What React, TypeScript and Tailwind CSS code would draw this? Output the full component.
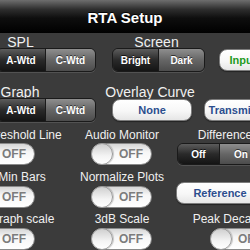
import React from "react";

const segSel =
  "flex h-full items-center justify-center text-[10px] font-bold text-white bg-[linear-gradient(to_bottom,#5c5c5c,#2a2a2a_50%,#141414)] [text-shadow:0_-1px_0_rgba(0,0,0,0.7)]";
const segUn =
  "flex h-full items-center justify-center text-[10px] font-bold text-white bg-[linear-gradient(to_bottom,#8e8e8e,#666666_50%,#4c4c4c)] [text-shadow:0_-1px_0_rgba(0,0,0,0.6)]";

function Seg({
  a,
  b,
  wa,
  wb,
  h = "h-[24px]",
  sel = 0,
}: {
  a: string;
  b: string;
  wa: string;
  wb: string;
  h?: string;
  sel?: number;
}) {
  return (
    <div
      className={`flex shrink-0 ${h} overflow-hidden rounded-[6px] border border-[#1a1a1a] shadow-[0_1px_0_rgba(255,255,255,0.12)]`}
    >
      <div className={`${wa} ${sel === 0 ? segSel : segUn} border-r border-[#1a1a1a]`}>{a}</div>
      <div className={`${wb} ${sel === 1 ? segSel : segUn}`}>{b}</div>
    </div>
  );
}

function WhiteBtn({ children, w, color = "text-[#2c4e8e]", extra = "" }: { children: React.ReactNode; w: string; color?: string; extra?: string }) {
  return (
    <div
      className={`flex h-[22px] ${w} shrink-0 items-center justify-center whitespace-nowrap rounded-[8px] border border-[#7c7c7c] bg-[linear-gradient(to_bottom,#ffffff,#f7f7f7_55%,#e6e6e6)] text-[11px] font-bold ${color} shadow-[0_1px_1px_rgba(0,0,0,0.4)] ${extra}`}
    >
      {children}
    </div>
  );
}

function Switch({ ml }: { ml: string }) {
  return (
    <div
      className={`flex h-[22px] w-[61px] shrink-0 items-center rounded-full border border-[#8a8a8a] bg-[linear-gradient(to_bottom,#d6d6d6,#f6f6f6_40%,#ffffff)] ${ml}`}
    >
      <div className="-ml-px h-[22px] w-[22px] shrink-0 rounded-full border border-[#9a9a9a] bg-[linear-gradient(to_bottom,#cfcfcf,#f4f4f4_60%,#ffffff)] shadow-[1px_0_1px_rgba(0,0,0,0.2)]" />
      <span className="flex-1 pr-[2px] text-center text-[12px] font-bold leading-none text-[#7c7c7c]">OFF</span>
    </div>
  );
}

export default function App() {
  return (
    <div className="flex h-[250px] w-[250px] flex-col overflow-hidden bg-[#3b3b3b] font-['Liberation_Sans',Arial,sans-serif] text-[#f0f0f0]">
      <div className="flex h-[33px] shrink-0 items-center justify-center bg-[linear-gradient(to_bottom,#6e6e6e_0%,#2e2e2e_28%,#0e0e0e_55%,#000000_100%)] pt-[2px] text-[15px] font-bold leading-none text-white [text-shadow:0_-1px_0_rgba(0,0,0,0.8)]">
        RTA Setup
      </div>

      {/* Row 1 labels */}
      <div className="mt-[3px] flex h-[12px] shrink-0 items-center whitespace-nowrap text-[14px] leading-none">
        <div className="w-[41px] shrink-0 text-center">SPL</div>
        <div className="ml-[89px] w-[53px] shrink-0 text-center">Screen</div>
      </div>
      {/* Row 1 controls */}
      <div className="flex h-[24px] shrink-0 items-center">
        <div className="-ml-[4px] shrink-0">
          <Seg a="A-Wtd" b="C-Wtd" wa="w-[49px]" wb="w-[49px]" sel={0} />
        </div>
        <div className="ml-[16px] shrink-0">
          <Seg a="Bright" b="Dark" wa="w-[46px]" wb="w-[45px]" sel={0} />
        </div>
        <WhiteBtn w="w-[48px]" color="text-[#1f9a1f]" extra="ml-[14px]">
          Input
        </WhiteBtn>
      </div>

      {/* Row 2 labels */}
      <div className="mt-[14px] flex h-[12px] shrink-0 items-center whitespace-nowrap text-[14px] leading-none">
        <div className="w-[40px] shrink-0 text-center">Graph</div>
        <div className="ml-[60px] w-[100px] shrink-0 text-center">Overlay Curve</div>
      </div>
      {/* Row 2 controls */}
      <div className="flex h-[24px] shrink-0 items-center">
        <div className="-ml-[4px] shrink-0">
          <Seg a="A-Wtd" b="C-Wtd" wa="w-[49px]" wb="w-[49px]" sel={0} />
        </div>
        <WhiteBtn w="w-[80px]" extra="ml-[16px]">
          None
        </WhiteBtn>
        <WhiteBtn w="w-[80px]" extra="ml-[12px]">
          Transmission
        </WhiteBtn>
      </div>

      {/* Row 3 labels */}
      <div className="mt-[7px] flex h-[12px] shrink-0 items-center whitespace-nowrap text-[12px] leading-none">
        <div className="-ml-[23px] w-[90px] shrink-0 text-center">Threshold Line</div>
        <div className="ml-[10px] w-[90px] shrink-0 text-center">Audio Monitor</div>
        <div className="ml-[13px] w-[90px] shrink-0 text-center">Difference</div>
      </div>
      {/* Row 3 controls */}
      <div className="mt-[2px] flex h-[22px] shrink-0 items-center">
        <Switch ml="-ml-[26px]" />
        <Switch ml="ml-[56px]" />
        <div className="ml-[25px] shrink-0">
          <Seg a="Off" b="On" wa="w-[42px]" wb="w-[42px]" h="h-[22px]" sel={0} />
        </div>
      </div>

      {/* Row 4 labels */}
      <div className="mt-[6px] flex h-[12px] shrink-0 items-center whitespace-nowrap text-[12px] leading-none">
        <div className="-ml-[23px] w-[90px] shrink-0 text-center">Min Bars</div>
        <div className="ml-[10px] w-[90px] shrink-0 text-center">Normalize Plots</div>
      </div>
      {/* Row 4 controls */}
      <div className="mt-[3px] flex h-[22px] shrink-0 items-start">
        <Switch ml="-ml-[26px]" />
        <Switch ml="ml-[56px]" />
        <WhiteBtn w="w-[88px]" extra="ml-[24px] -mt-[4px] h-[21px]">
          Reference
        </WhiteBtn>
      </div>

      {/* Row 5 labels */}
      <div className="mt-[5px] flex h-[12px] shrink-0 items-center whitespace-nowrap text-[12px] leading-none">
        <div className="-ml-[23px] w-[90px] shrink-0 text-center">Graph scale</div>
        <div className="ml-[10px] w-[90px] shrink-0 text-center">3dB Scale</div>
        <div className="ml-[13px] w-[90px] shrink-0 text-center">Peak Decay</div>
      </div>
      {/* Row 5 controls */}
      <div className="mt-[3px] flex h-[22px] shrink-0 items-center">
        <Switch ml="-ml-[26px]" />
        <Switch ml="ml-[56px]" />
        <Switch ml="ml-[58px]" />
      </div>
    </div>
  );
}
